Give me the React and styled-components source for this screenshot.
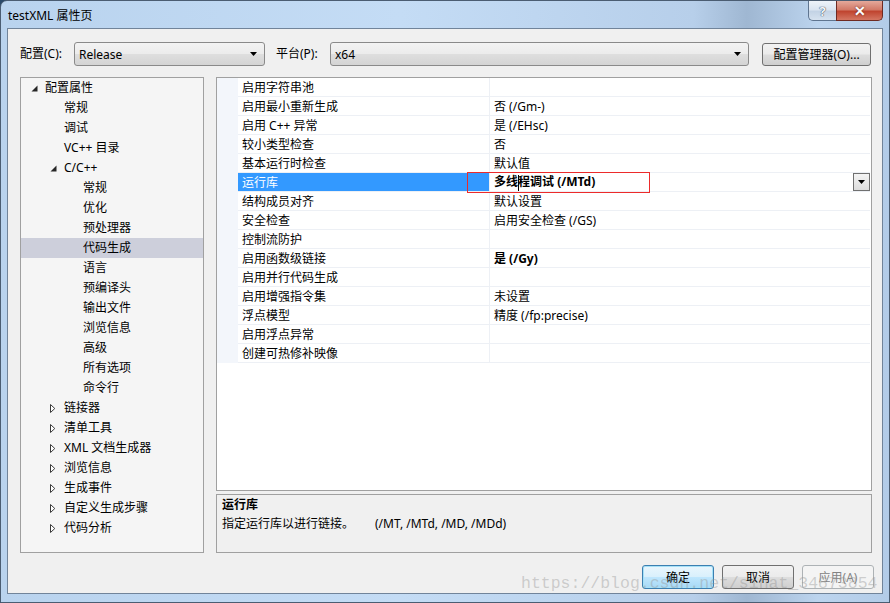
import React from 'react'
import styled, { createGlobalStyle, css } from 'styled-components'

const GlobalStyle = createGlobalStyle`
  html, body { margin: 0; padding: 0; background: #2b4a6a; }
  body {
    font-family: "Noto Sans", "Noto Sans CJK SC", sans-serif;
    font-size: 12px;
    color: #000;
  }
  * { box-sizing: border-box; }
`

const Window = styled.div`
  position: relative;
  width: 890px;
  height: 603px;
  overflow: hidden;
  display: flex;
  flex-direction: column;
  border: 1px solid #4b5d72;
  border-top-left-radius: 7px;
  background: linear-gradient(90deg, #b9d3ee 0%, #c4dcf5 45%, #b7cfea 78%, #9fb7d2 84%, #bcd4ee 92%, #b3cce8 100%);
`

const TitleBar = styled.div`
  height: 27px;
  display: flex;
  align-items: flex-start;
  flex-shrink: 0;
`

const Title = styled.div`
  flex: 1;
  padding: 8px 0 0 7px;
  line-height: 14px;
  font-size: 12px;
`

const CaptionButton = styled.div`
  height: 20px;
  display: flex;
  align-items: center;
  justify-content: center;
  font-weight: 700;
  color: #fff;
  ${p => p.$close ? css`
    width: 47px;
    margin-right: 6px;
    border: 1px solid #6e2a22;
    border-top: none;
    border-radius: 0 0 5px 0;
    background: linear-gradient(#e4a99b 0%, #d27a68 45%, #c04530 55%, #d47662 100%);
    font-size: 14px;
    text-shadow: 0 0 2px #5a1a10;
  ` : css`
    width: 28px;
    border: 1px solid #5f7590;
    border-top: none;
    border-right: none;
    border-radius: 0 0 0 5px;
    background: linear-gradient(#eef3f9 0%, #dbe5f1 45%, #c3d3e5 55%, #d6e2ef 100%);
    font-size: 13px;
    color: #f4f7fb;
    text-shadow: 0 0 1px #2d3d52, 0 0 1px #2d3d52;
  `}
`

const Frame = styled.div`
  flex: 1;
  display: flex;
  padding: 0 6px 8px 6px;
`

const Client = styled.div`
  flex: 1;
  display: flex;
  flex-direction: column;
  background: #f0f0f0;
  border: 1px solid #71849a;
  padding: 13px 10px 4px 12px;
`

const TopRow = styled.div`
  display: flex;
  align-items: center;
  height: 24px;
`

const Label = styled.div`
  width: 54px;
  line-height: 16px;
`

const Combo = styled.div`
  width: ${p => p.$w}px;
  height: 24px;
  margin-right: ${p => p.$mr || 0}px;
  display: flex;
  align-items: center;
  padding-left: 4px;
  border: 1px solid #8a8a8a;
  border-radius: 3px;
  background: linear-gradient(#f3f3f3 0%, #ececec 48%, #dedede 52%, #d4d4d4 100%);
  span { flex: 1; }
`

const Arrow = () => (
  <svg width="7" height="4" viewBox="0 0 7 4" style={{ marginRight: 7 }}>
    <polygon points="0,0 7,0 3.5,4" fill="#000" />
  </svg>
)

const Button = styled.div`
  width: ${p => p.$w || 72}px;
  height: ${p => p.$h || 24}px;
  display: flex;
  align-items: center;
  justify-content: center;
  border-radius: 3px;
  border: 1px solid #707070;
  background: linear-gradient(#f2f2f2 0%, #ebebeb 48%, #dddddd 52%, #cfcfcf 100%);
  ${p => p.$default && css`
    border-color: #3c7fb1;
    box-shadow: inset 0 0 0 1px #a6e1f7;
    background: linear-gradient(#eaf6fd 0%, #d9f0fc 48%, #bee6fd 52%, #a7d9f5 100%);
  `}
  ${p => p.$disabled && css`
    border-color: #adb2b5;
    background: #f4f4f4;
    color: #838383;
  `}
`

const Main = styled.div`
  display: flex;
  gap: 12px;
  margin-top: 11px;
  height: 476px;
`

const Tree = styled.div`
  width: 184px;
  border: 1px solid #a0a0a0;
  background: #f5f5f5;
`

const TreeRow = styled.div`
  height: 20px;
  display: flex;
  align-items: center;
  padding-left: ${p => 10 + p.$level * 19}px;
  background: ${p => (p.$selected ? '#cdcfdb' : 'transparent')};
  line-height: 16px;
  white-space: nowrap;
`

const Expander = styled.div`
  width: 14px;
  height: 20px;
  display: flex;
  align-items: center;
`

const RightCol = styled.div`
  flex: 1;
  display: flex;
  flex-direction: column;
  gap: 3px;
`

const Grid = styled.div`
  height: 414px;
  border: 1px solid #a0a0a0;
  background: #fff;
  display: flex;
  flex-direction: column;
`

const GridRow = styled.div`
  display: grid;
  grid-template-columns: 21px 252px 1fr;
  height: 19px;
  margin-right: 1px;
`

const Gutter = styled.div`
  background: #f3f6fb;
`

const Cell = styled.div`
  display: flex;
  align-items: center;
  padding: 1px 0 0 4px;
  border-bottom: 1px solid #edf0f5;
  ${p => p.$name && css`border-right: 1px solid #edf0f5;`}
  line-height: 16px;
  white-space: nowrap;
  font-weight: ${p => (p.$bold ? 700 : 400)};
  background: ${p => (p.$selected ? '#3399ff' : 'transparent')};
  color: ${p => (p.$selected ? '#fff' : '#000')};
  span { flex: 1; }
`

const DropButton = styled.div`
  width: 17px;
  height: 18px;
  display: flex;
  align-items: center;
  justify-content: center;
  border: 1px solid #707070;
  background: linear-gradient(#f4f4f4, #dcdcdc);
  margin-top: -1px;
  svg { margin: 0 !important; }
`

const Caret = styled.i`
  display: inline-block;
  width: 1px;
  height: 16px;
  margin: 0 -0.5px;
  background: #000;
  vertical-align: middle;
`

const Description = styled.div`
  flex: 1;
  border: 1px solid #a0a0a0;
  background: #f0f0f0;
  padding: 1px 0 0 5px;
  line-height: 18.5px;
`

const DescTitle = styled.div`
  font-weight: 700;
`

const Switches = styled.span`
  margin-left: 21px;
`

const ButtonRow = styled.div`
  display: flex;
  justify-content: flex-end;
  gap: 8px;
  margin-top: 12px;
  margin-right: -2px;
`

const RedMark = styled.div`
  position: absolute;
  left: 466px;
  top: 171px;
  width: 183px;
  height: 21px;
  border: 1px solid #ec2b2b;
  pointer-events: none;
`

const Watermark = styled.div`
  position: absolute;
  left: 520px;
  top: 573px;
  font-family: "Liberation Mono", "DejaVu Sans Mono", monospace;
  font-size: 16.5px;
  line-height: 20px;
  color: rgba(150, 150, 150, 0.42);
  white-space: nowrap;
  pointer-events: none;
`

const tree = [
  { l: 0, t: '配置属性', a: 'open' },
  { l: 1, t: '常规' },
  { l: 1, t: '调试' },
  { l: 1, t: 'VC++ 目录' },
  { l: 1, t: 'C/C++', a: 'open' },
  { l: 2, t: '常规' },
  { l: 2, t: '优化' },
  { l: 2, t: '预处理器' },
  { l: 2, t: '代码生成', sel: true },
  { l: 2, t: '语言' },
  { l: 2, t: '预编译头' },
  { l: 2, t: '输出文件' },
  { l: 2, t: '浏览信息' },
  { l: 2, t: '高级' },
  { l: 2, t: '所有选项' },
  { l: 2, t: '命令行' },
  { l: 1, t: '链接器', a: 'closed' },
  { l: 1, t: '清单工具', a: 'closed' },
  { l: 1, t: 'XML 文档生成器', a: 'closed' },
  { l: 1, t: '浏览信息', a: 'closed' },
  { l: 1, t: '生成事件', a: 'closed' },
  { l: 1, t: '自定义生成步骤', a: 'closed' },
  { l: 1, t: '代码分析', a: 'closed' },
]

const props = [
  ['启用字符串池', ''],
  ['启用最小重新生成', '否 (/Gm-)'],
  ['启用 C++ 异常', '是 (/EHsc)'],
  ['较小类型检查', '否'],
  ['基本运行时检查', '默认值'],
  ['运行库', 'MTD', true],
  ['结构成员对齐', '默认设置'],
  ['安全检查', '启用安全检查 (/GS)'],
  ['控制流防护', ''],
  ['启用函数级链接', '是 (/Gy)', false, true],
  ['启用并行代码生成', ''],
  ['启用增强指令集', '未设置'],
  ['浮点模型', '精度 (/fp:precise)'],
  ['启用浮点异常', ''],
  ['创建可热修补映像', ''],
]

function ExpandIcon({ kind }) {
  if (kind === 'open') {
    return (
      <svg width="7" height="7" viewBox="0 0 7 7">
        <polygon points="6.5,0.5 6.5,6.5 0.5,6.5" fill="#262626" />
      </svg>
    )
  }
  if (kind === 'closed') {
    return (
      <svg width="6" height="9" viewBox="0 0 6 9">
        <polygon points="0.5,0.5 4.8,4.5 0.5,8.5" fill="#fff" stroke="#3a3a3a" strokeWidth="1" />
      </svg>
    )
  }
  return null
}

export default function App() {
  return (
    <>
      <GlobalStyle />
      <Window>
        <TitleBar>
          <Title>testXML 属性页</Title>
          <CaptionButton>?</CaptionButton>
          <CaptionButton $close>✕</CaptionButton>
        </TitleBar>
        <Frame>
          <Client>
            <TopRow>
              <Label>配置(C):</Label>
              <Combo $w={191} $mr={11}><span>Release</span><Arrow /></Combo>
              <Label>平台(P):</Label>
              <Combo $w={419} $mr={13}><span>x64</span><Arrow /></Combo>
              <Button $w={109} $h={23}>配置管理器(O)...</Button>
            </TopRow>

            <Main>
              <Tree>
                {tree.map((n, i) => (
                  <TreeRow key={i} $level={n.l} $selected={n.sel}>
                    <Expander><ExpandIcon kind={n.a} /></Expander>
                    {n.t}
                  </TreeRow>
                ))}
              </Tree>

              <RightCol>
                <Grid>
                  {props.map(([name, value, selected, bold], i) => (
                    <GridRow key={i}>
                      <Gutter />
                      <Cell $name $selected={selected}>{name}</Cell>
                      {selected ? (
                        <Cell $bold>
                          <span>多线<Caret />程调试 (/MTd)</span>
                          <DropButton><Arrow /></DropButton>
                        </Cell>
                      ) : (
                        <Cell $bold={bold}>{value}</Cell>
                      )}
                    </GridRow>
                  ))}
                </Grid>
                <Description>
                  <DescTitle>运行库</DescTitle>
                  <div>指定运行库以进行链接。<Switches>(/MT, /MTd, /MD, /MDd)</Switches></div>
                </Description>
              </RightCol>
            </Main>

            <ButtonRow>
              <Button $default>确定</Button>
              <Button>取消</Button>
              <Button $disabled>应用(A)</Button>
            </ButtonRow>
          </Client>
        </Frame>
        <RedMark />
        <Watermark>https://blog.csdn.net/sinat_34873854</Watermark>
      </Window>
    </>
  )
}
